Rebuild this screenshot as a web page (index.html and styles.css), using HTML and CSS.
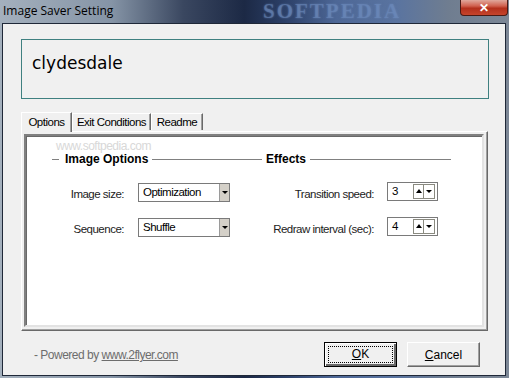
FILE: index.html
```html
<!DOCTYPE html>
<html lang="en">

<head>
    <meta charset="UTF-8">
    <title>Image Saver Setting</title>
    <link rel="stylesheet" href="styles.css">
</head>

<body>
    <div class="window">
        <div class="titlebar">
            <span class="title">Image Saver Setting</span>
            <span class="watermark">SOFTPEDIA</span>
            <button class="close">&#x2715;</button>
        </div>

        <div class="client">
            <!-- имя текущего набора картинок -->
            <div class="namebox">clydesdale</div>

            <div class="tabs">
                <div class="tab selected tab-options">Options</div>
                <div class="tab tab-exit">Exit Conditions</div>
                <div class="tab tab-readme">Readme</div>
            </div>

            <div class="panel">
                <div class="panel-inner">
                    <span class="softmark">www.softpedia.com</span>

                    <div class="group group-image">
                        <div class="group-head"><span class="dash"></span><b>Image Options</b><span class="line"></span></div>
                        <label>Image size:</label>
                        <div class="select"><span>Optimization</span><i class="drop"></i></div>
                        <label>Sequence:</label>
                        <div class="select"><span>Shuffle</span><i class="drop"></i></div>
                    </div>

                    <div class="group group-effects">
                        <div class="group-head"><b>Effects</b><span class="line"></span></div>
                        <label>Transition speed:</label>
                        <div class="spin"><span>3</span><i class="up"></i><i class="down"></i></div>
                        <label>Redraw interval (sec):</label>
                        <div class="spin"><span>4</span><i class="up"></i><i class="down"></i></div>
                    </div>
                </div>
            </div>

            <div class="footer">
                <span class="powered">- Powered by <a href="#">www.2flyer.com</a></span>
                <button class="btn default"><span class="focus"><u>O</u>K</span></button>
                <button class="btn"><u>C</u>ancel</button>
            </div>
        </div>
    </div>
</body>

</html>
```

FILE: styles.css
```css
* {
    box-sizing: border-box;
}

body {
    margin: 0;
    width: 509px;
    height: 378px;
    overflow: hidden;
    font-family: "Liberation Sans", Arial, sans-serif;
    font-size: 11.5px;
    letter-spacing: -0.5px;
    color: #000;
}

/* Окно со стеклянной рамкой */
.window {
    width: 509px;
    height: 378px;
    display: flex;
    flex-direction: column;
    background: linear-gradient(90deg, #a4b0bd 0%, #8594a6 22%, #3a4760 36%, #1c2945 48%, #2c4068 56%, #4d6796 66%, #5a74a0 78%, #6f7d90 88%, #7c8796 100%);
}

.titlebar {
    position: relative;
    height: 23px;
    display: flex;
    align-items: flex-start;
}

.title {
    font-family: "Open Sans", sans-serif;
    font-size: 12px;
    letter-spacing: 0;
    padding: 2px 0 0 3px;
}

.watermark {
    position: absolute;
    left: 263px;
    top: 1px;
    font-family: "Liberation Serif", serif;
    font-weight: bold;
    font-size: 21px;
    line-height: 21px;
    letter-spacing: 2px;
    color: rgba(110, 140, 190, 0.5);
    text-shadow: 0 0 2px rgba(110, 140, 190, 0.6);
}

.close {
    margin-left: auto;
    margin-right: 1px;
    width: 48px;
    height: 16px;
    padding: 0;
    border: 1px solid #4a1a14;
    border-top: none;
    border-radius: 0 0 4px 4px;
    background: linear-gradient(#e0a89c, #d0604e 40%, #b3301c 55%, #c6442c 100%);
    color: #fff;
    font-weight: bold;
    font-size: 12px;
    line-height: 14px;
    position: relative;
}

.client {
    flex: 1;
    margin: 0 3px 2px 2px;
    border: 1px solid #1f2838;
    background: #f0f0f0;
    display: flex;
    flex-direction: column;
    padding: 15px 16px 0 18px;
}

.namebox {
    height: 60px;
    border: 1px solid #3f8080;
    padding: 13px 0 0 10px;
    font-family: "DejaVu Sans", sans-serif;
    font-size: 17px;
    letter-spacing: 0;
    line-height: 20px;
}

/* Вкладки */
.tabs {
    display: flex;
    align-items: flex-end;
    margin-top: 12px;
    height: 20px;
    position: relative;
    z-index: 1;
}

.tab {
    height: 17px;
    line-height: 16px;
    text-align: center;
    white-space: nowrap;
    background: #f0f0f0;
    border-top: 1px solid #fff;
    border-left: 1px solid #fff;
    border-right: 1px solid #696969;
    box-shadow: inset -1px 0 #a0a0a0;
    margin-bottom: 1px;
}

.tab.selected {
    height: 20px;
    line-height: 18px;
    margin-bottom: -1px;
}

.tab-options {
    width: 51px;
}

.tab-exit {
    width: 79px;
}

.tab-readme {
    width: 52px;
}

.panel {
    height: 200px;
    margin-right: 1px;
    border: 1px solid;
    border-color: #fff #696969 #696969 #fff;
    box-shadow: inset -1px -1px #a0a0a0;
    padding: 2px 3px 3px 2px;
}

.panel-inner {
    position: relative;
    height: 100%;
    background: #fff;
    border: 2px solid;
    border-color: #808080 #e3e3e3 #e3e3e3 #808080;
    box-shadow: inset 1px 1px #696969;
    display: flex;
    padding: 14px 0 0 26px;
}

.softmark {
    position: absolute;
    left: 30px;
    top: 3px;
    font-size: 12px;
    color: #d8d8d8;
}

.group {
    display: grid;
    grid-template-rows: 18px 19px 19px;
    row-gap: 16px;
    align-items: center;
}

.group-image {
    width: 210px;
    grid-template-columns: 72px 92px 1fr;
    column-gap: 14px;
}

.group-effects {
    width: 189px;
    grid-template-columns: 112px 51px 1fr;
    column-gap: 13px;
}

.group-head {
    grid-column: 1 / -1;
    display: flex;
    align-items: center;
    gap: 4px;
}

.group-effects .group-head {
    padding-left: 4px;
}

.group-head b {
    font-size: 12px;
    letter-spacing: 0;
}

.dash {
    width: 7px;
    height: 1px;
    background: #808080;
    margin-right: 2px;
}

.line {
    flex: 1;
    height: 1px;
    background: #808080;
}

label {
    grid-column: 1;
    text-align: right;
    white-space: nowrap;
    color: #222;
}

.select {
    grid-column: 2;
    height: 19px;
    margin-top: -3px;
    border: 1px solid #7a7a7a;
    display: flex;
    align-items: center;
    padding-left: 4px;
}

.select span {
    flex: 1;
}

.drop {
    width: 10px;
    height: 100%;
    background: #d4d0c8;
    border-left: 1px solid #9a9a9a;
    display: flex;
    align-items: center;
    justify-content: center;
}

.drop::after,
.down::after {
    content: "";
    border-left: 3px solid transparent;
    border-right: 3px solid transparent;
    border-top: 3px solid #000;
}

.spin {
    grid-column: 2;
    height: 19px;
    margin-top: -5px;
    border: 1px solid #7a7a7a;
    display: flex;
    align-items: center;
    padding: 0 2px 0 4px;
}

.spin span {
    flex: 1;
}

.up,
.down {
    width: 11px;
    height: 15px;
    border: 1px solid #8a8a80;
    background: #fff;
    display: flex;
    align-items: center;
    justify-content: center;
}

.down {
    border-left: none;
}

.up::after {
    content: "";
    border-left: 3px solid transparent;
    border-right: 3px solid transparent;
    border-bottom: 4px solid #000;
}

/* Нижняя строка с кнопками */
.footer {
    display: flex;
    align-items: flex-start;
    padding: 11px 9px 0 13px;
}

.powered {
    flex: 1;
    margin-top: 6px;
    font-size: 12px;
    color: #6d6d6d;
}

.powered a {
    color: #6d6d6d;
}

.btn {
    width: 73px;
    height: 25px;
    margin-left: 10px;
    padding: 0;
    font-family: inherit;
    font-size: 12px;
    letter-spacing: 0;
    background: #f0f0f0;
    border: 1px solid;
    border-color: #fff #696969 #696969 #fff;
    box-shadow: inset -1px -1px #a0a0a0;
}

.btn.default {
    border: 1px solid #000;
    box-shadow: inset 1px 1px #fff, inset -2px -2px #696969;
    padding: 3px;
}

.focus {
    display: block;
    height: 100%;
    border: 1px dotted #000;
    line-height: 15px;
}
```
